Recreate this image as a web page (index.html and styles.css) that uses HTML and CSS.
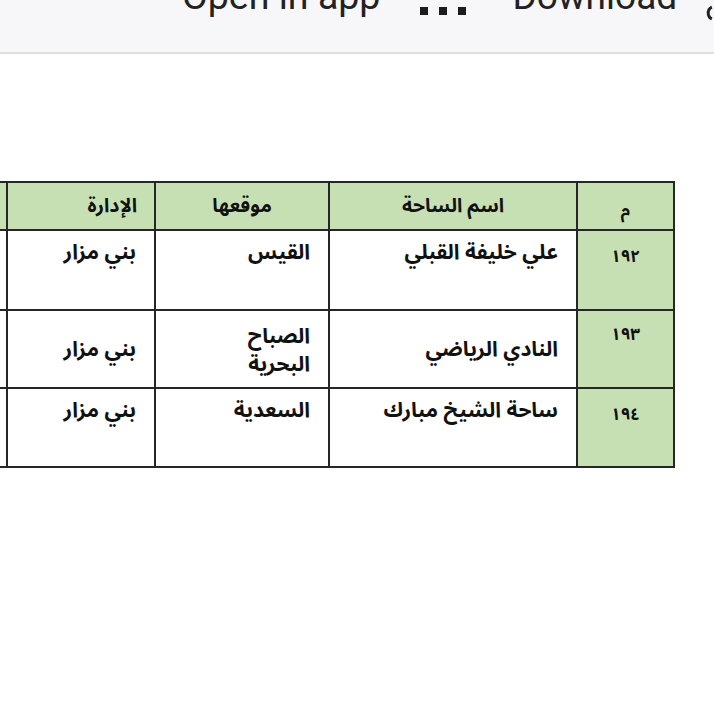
FILE: index.html
```html
<!DOCTYPE html>
<html lang="en">
<head>
<meta charset="utf-8">
<title>Table</title>
<link rel="stylesheet" href="styles.css">
</head>
<body>
<header class="appbar">
  <div class="appbar-row">
    <span class="open">Open in app</span>
    <span class="dots"><i></i><i></i><i></i></span>
    <span class="download">Download</span>
    <svg class="edge" width="10" height="16" viewBox="0 0 10 16"><path d="M8 2 C3 4 3 12 8 14" fill="none" stroke="#222" stroke-width="3"/></svg>
  </div>
</header>
<main class="sheet">
  <div class="grid" dir="rtl">
    <div class="cell head num"><span class="n">م</span></div>
    <div class="cell head center">اسم الساحة</div>
    <div class="cell head center">موقعها</div>
    <div class="cell head right">الإدارة</div>
    <div class="cell head"></div>

    <div class="cell num top"><span class="n">١٩٢</span></div>
    <div class="cell top">علي خليفة القبلي</div>
    <div class="cell top">القيس</div>
    <div class="cell top">بني مزار</div>
    <div class="cell"></div>

    <div class="cell num top2"><span class="n">١٩٣</span></div>
    <div class="cell mid">النادي الرياضي</div>
    <div class="cell mid two">الصباح<br>البحرية</div>
    <div class="cell mid">بني مزار</div>
    <div class="cell"></div>

    <div class="cell num top3"><span class="n">١٩٤</span></div>
    <div class="cell top">ساحة الشيخ مبارك</div>
    <div class="cell top">السعدية</div>
    <div class="cell top">بني مزار</div>
    <div class="cell"></div>
  </div>
</main>
</body>
</html>
```

FILE: styles.css
```css
html, body {
  margin: 0;
  padding: 0;
  background: #ffffff;
  overflow: hidden;
}

body {
  width: 714px;
  height: 704px;
}

.appbar {
  height: 52px;
  background: #f7f7f9;
  border-bottom: 2px solid #dedee0;
  overflow: hidden;
}

.appbar-row {
  display: flex;
  align-items: flex-start;
  margin-top: -22px;
  padding-left: 182px;
  font-family: Roboto, "Liberation Sans", sans-serif;
  font-size: 37.5px;
  line-height: 37px;
  color: #222222;
  white-space: nowrap;
}

.dots {
  display: flex;
  gap: 11px;
  margin-top: 29px;
  margin-left: 40px;
}

.dots i {
  display: block;
  width: 8px;
  height: 8px;
  background: #1c1c1c;
}

.download {
  margin-left: 46px;
  font-size: 37px;
}

.edge {
  margin-left: 27px;
  margin-top: 27px;
}

.sheet {
  display: flex;
  justify-content: flex-end;
  padding-right: 39px;
  margin-top: 127px;
}

.grid {
  flex: none;
  display: grid;
  grid-template-columns: 95px 246px 172px 146px 80px;
  grid-template-rows: 46px 78px 76px 77px;
  gap: 2px;
  padding: 2px;
  background: #262626;
  font-family: "Noto Sans Arabic", "Noto Naskh Arabic", "DejaVu Sans", sans-serif;
  font-weight: bold;
  font-size: 21px;
  color: #111111;
}

.cell {
  background: #ffffff;
  display: flex;
  justify-content: flex-start;
  padding-right: 18px;
  line-height: 28px;
}

.head {
  background: #c6e0b4;
  align-items: center;
  font-size: 19.5px;
}

.center {
  justify-content: center;
  padding-right: 0;
}

.right {
  padding-right: 17px;
}

.top {
  align-items: flex-start;
  padding-top: 7px;
}

.mid {
  align-items: center;
}

.two {
  line-height: 28px;
  padding-top: 2px;
}

.num {
  background: #c6e0b4;
  justify-content: center;
  padding-right: 0;
  align-items: flex-start;
  font-size: 17px;
}

.num.head {
  align-items: center;
  padding-top: 10px;
}

.top2 {
  padding-top: 10px;
}

.top3 {
  padding-top: 12px;
}

.num.top {
  padding-top: 12px;
}
```
